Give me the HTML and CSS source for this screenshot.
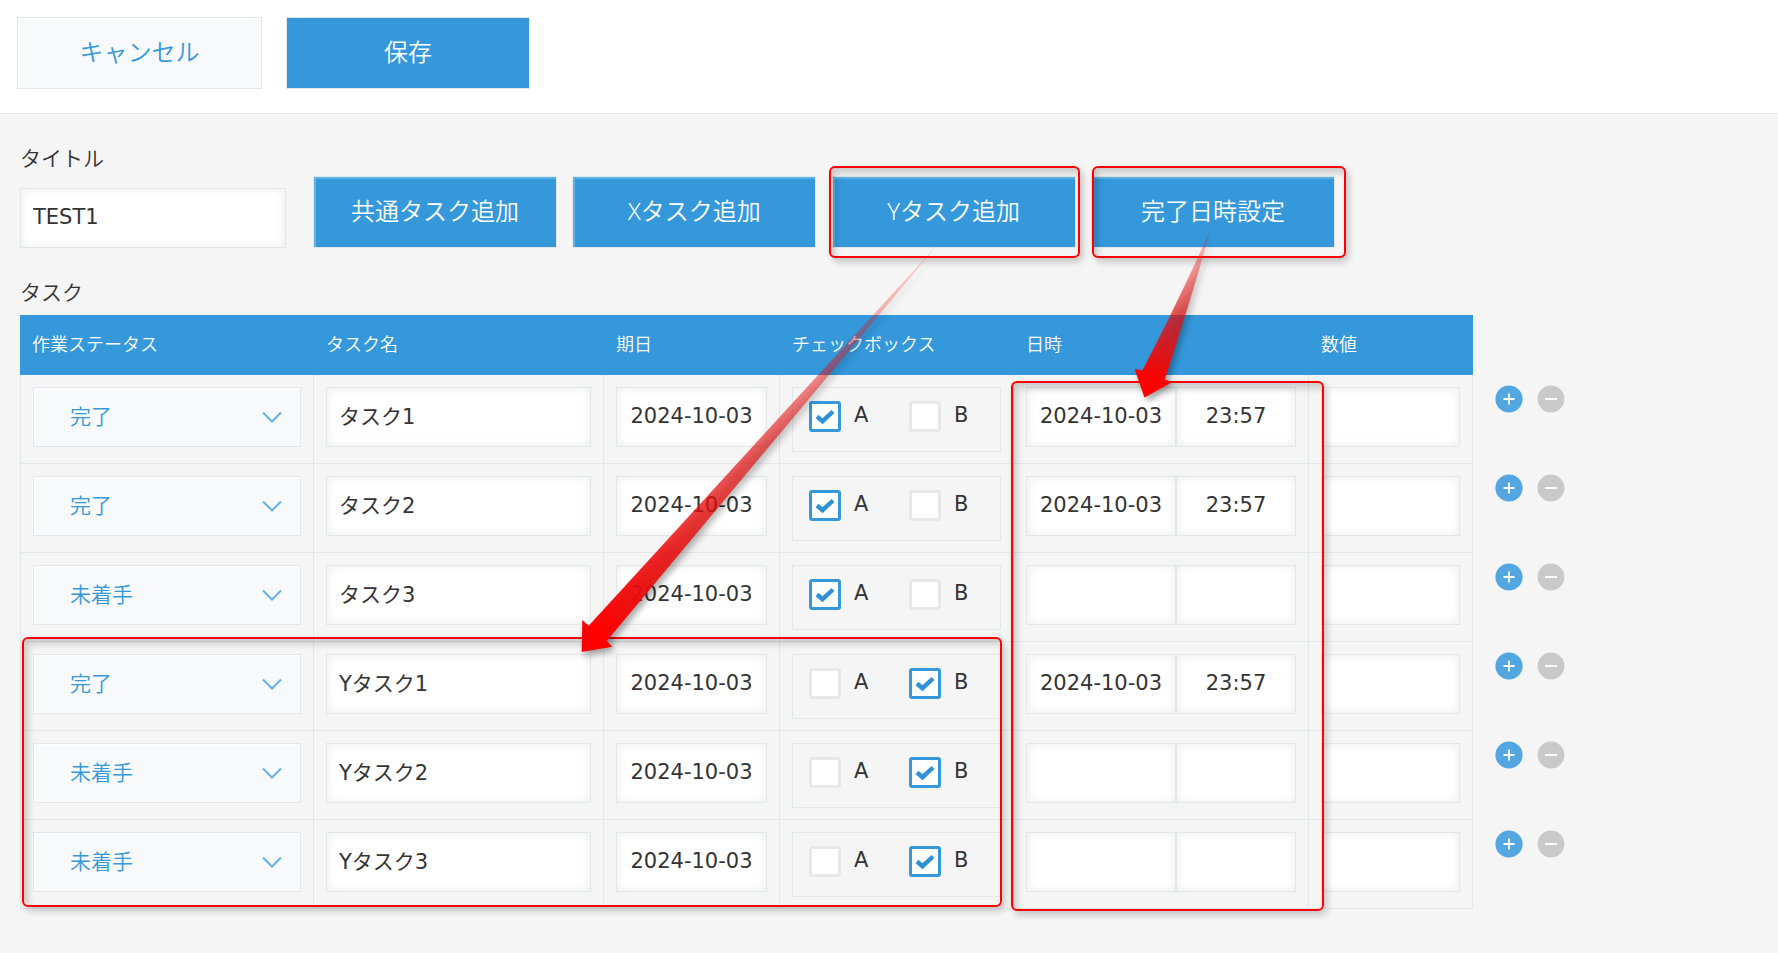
FILE: index.html
```html
<!DOCTYPE html>
<html lang="ja">
<head>
  <meta charset="UTF-8">
  <title>タスク</title>
  <meta name="viewport" content="width=device-width, initial-scale=1.0">
  <link rel="stylesheet" href="styles.css">
</head>
<body>

  <header class="toolbar">
    <button class="btn btn-cancel">キャンセル</button>
    <button class="btn btn-save">保存</button>
  </header>

  <main class="record">
    <div class="title-row">
      <div class="field">
        <label class="field-label" for="title">タイトル</label>
        <input class="input" type="text" id="title" value="TEST1">
      </div>
      <div class="actions">
        <button class="btn btn-action">共通タスク追加</button>
        <button class="btn btn-action">Xタスク追加</button>
        <button class="btn btn-action">Yタスク追加</button>
        <button class="btn btn-action">完了日時設定</button>
      </div>
    </div>

    <div class="field-label table-label">タスク</div>
    <table class="task-table">
      <colgroup>
        <col class="col-status">
        <col class="col-name">
        <col class="col-date">
        <col class="col-check">
        <col class="col-datetime">
        <col class="col-number">
        <col class="col-buttons">
      </colgroup>
      <thead>
        <tr>
          <th>作業ステータス</th>
          <th>タスク名</th>
          <th>期日</th>
          <th>チェックボックス</th>
          <th>日時</th>
          <th>数値</th>
          <td></td>
        </tr>
      </thead>
      <tbody id="taskRows"></tbody>
    </table>
  </main>

  <!-- annotations -->
  <div class="mark mark-ytask"></div>
  <div class="mark mark-donetime"></div>
  <div class="mark mark-rows"></div>
  <div class="mark mark-datetime"></div>
  <svg class="arrows" width="1778" height="953" viewBox="0 0 1778 953">
    <defs>
      <linearGradient id="fade1" gradientUnits="userSpaceOnUse" x1="940" y1="242" x2="597" y2="634">
        <stop offset="0" stop-color="#f00" stop-opacity="0.1"/>
        <stop offset="0.5" stop-color="#e51010" stop-opacity="0.62"/>
        <stop offset="0.9" stop-color="#f00a0a" stop-opacity="0.95"/>
        <stop offset="1" stop-color="#f00"/>
      </linearGradient>
      <linearGradient id="fade2" gradientUnits="userSpaceOnUse" x1="1211" y1="228" x2="1152" y2="378">
        <stop offset="0" stop-color="#f00" stop-opacity="0.15"/>
        <stop offset="0.5" stop-color="#e51010" stop-opacity="0.62"/>
        <stop offset="0.9" stop-color="#f00a0a" stop-opacity="0.95"/>
        <stop offset="1" stop-color="#f00"/>
      </linearGradient>
    </defs>
    <path fill="url(#fade1)" d="M940 242L588.7 625.7L582.3 620L581.7 652L612.3 646.7L606.7 641Z"/>
    <path fill="url(#fade2)" d="M1211 228Q1184 290 1142.5 370.3L1134.6 369L1144.5 397.5L1173 381.7L1164.7 379.7Q1194 290 1211 228Z"/>
  </svg>

  <script>
    const tasks = [
      { status: "完了", name: "タスク1", date: "2024-10-03", check: "A", doneDate: "2024-10-03", doneTime: "23:57" },
      { status: "完了", name: "タスク2", date: "2024-10-03", check: "A", doneDate: "2024-10-03", doneTime: "23:57" },
      { status: "未着手", name: "タスク3", date: "2024-10-03", check: "A", doneDate: "", doneTime: "" },
      { status: "完了", name: "Yタスク1", date: "2024-10-03", check: "B", doneDate: "2024-10-03", doneTime: "23:57" },
      { status: "未着手", name: "Yタスク2", date: "2024-10-03", check: "B", doneDate: "", doneTime: "" },
      { status: "未着手", name: "Yタスク3", date: "2024-10-03", check: "B", doneDate: "", doneTime: "" }
    ];

    function checkItem(label, checked) {
      return `
        <span class="check-item">
          <span class="check-box${checked ? " checked" : ""}">
            ${checked ? '<svg width="20" height="16" viewBox="0 0 20 16"><path d="M2 7.5L7.5 12.2L18 2.5"/></svg>' : ""}
          </span>
          <span class="check-label">${label}</span>
        </span>`;
    }

    document.getElementById("taskRows").innerHTML = tasks.map(t => `
      <tr>
        <td>
          <div class="select">
            <span>${t.status}</span>
            <svg class="chevron" width="20" height="13" viewBox="0 0 20 13"><path d="M1 1.5L10 10.5L19 1.5"/></svg>
          </div>
        </td>
        <td><input class="input" type="text" value="${t.name}"></td>
        <td><input class="input input-center" type="text" value="${t.date}"></td>
        <td>
          <div class="check-group">${checkItem("A", t.check === "A")}${checkItem("B", t.check === "B")}</div>
        </td>
        <td>
          <div class="datetime">
            <input class="input input-center" type="text" value="${t.doneDate}">
            <input class="input input-center input-time" type="text" value="${t.doneTime}">
          </div>
        </td>
        <td><input class="input" type="text" value=""></td>
        <td class="row-buttons">
          <div class="row-icons">
            <svg width="28" height="28" viewBox="0 0 28 28"><circle cx="14" cy="14" r="13.6" fill="#53a7e0"/><path d="M8.5 14h11M14 8.5v11"/></svg>
            <svg width="28" height="28" viewBox="0 0 28 28"><circle cx="14" cy="14" r="13.4" fill="#c9c9c9"/><path d="M8 14h12"/></svg>
          </div>
        </td>
      </tr>`).join("");
  </script>
</body>
</html>
```
FILE: styles.css
```css
* {
  box-sizing: border-box;
}

body {
  margin: 0;
  height: 953px;
  overflow: hidden;
  position: relative;
  background: #f5f5f5;
  color: #333;
  font-family: "DejaVu Sans", "Noto Sans CJK JP", sans-serif;
  font-size: 21px;
}

.toolbar {
  display: flex;
  gap: 24px;
  height: 114px;
  padding: 17px;
  background: #fff;
  border-bottom: 1px solid #e3e7e8;
}

.btn {
  width: 244px;
  height: 72px;
  padding: 0 0 6px;
  border: 1px solid #e3e7e8;
  font-family: "Noto Sans", "Noto Sans CJK JP", sans-serif;
  font-size: 24px;
  font-weight: 350;
  color: #fff;
  background: #3498db;
}

.btn-cancel {
  width: 245px;
  color: #3498db;
  background: #f7f9fa;
  box-shadow: inset 1px 1px 3px #fff;
}

.btn-action {
  box-shadow: inset 2px 2px 1px #5db4e6;
}

.record {
  padding: 30px 0 0 20px;
}

.title-row {
  display: flex;
  gap: 27px;
}

.field {
  width: 266px;
}

.field-label {
  display: block;
  height: 44px;
  line-height: 26px;
  font-family: "Noto Sans CJK JP", sans-serif;
  font-weight: 350;
}

.actions {
  display: flex;
  gap: 15.3px;
  padding-top: 32px;
}

.table-label {
  height: 37px;
  margin-top: 30px;
}

.input {
  display: block;
  width: 100%;
  height: 60px;
  padding: 0 12px 4px;
  border: 1px solid #e3e7e8;
  background: #fff;
  box-shadow: inset 2px 2px 8px #f3f3f3, inset -2px -2px 8px #f3f3f3;
  color: #333;
  font-family: inherit;
  font-size: 21px;
}

.input-center,
#title {
  padding-bottom: 2px;
}

.input-center {
  padding-left: 0;
  padding-right: 0;
  text-align: center;
}

.task-table {
  table-layout: fixed;
  width: 1563px;
  border-spacing: 0;
}

.col-status { width: 294px; }
.col-name { width: 290px; }
.col-date { width: 176px; }
.col-check { width: 234px; }
.col-datetime { width: 295px; }
.col-number { width: 164px; }
.col-buttons { width: 110px; }

th {
  height: 60px;
  padding: 0 12px 4px;
  background: #3498db;
  color: #fff;
  font-family: "Noto Sans CJK JP", sans-serif;
  font-size: 18px;
  font-weight: 350;
  text-align: left;
}

tbody td {
  height: 89px;
  padding: 12px 12px 0;
  border-right: 1px solid #e3e7e8;
  border-bottom: 1px solid #e3e7e8;
  vertical-align: top;
}

tbody td:first-child {
  border-left: 1px solid #e3e7e8;
}

.select {
  display: flex;
  align-items: center;
  justify-content: space-between;
  width: 268px;
  height: 60px;
  padding: 0 18px 0 36px;
  border: 1px solid #e3e7e8;
  background: #f7f9fa;
  box-shadow: inset 1px 1px 3px #fff;
  color: #3498db;
  font-family: "Noto Sans CJK JP", sans-serif;
  font-weight: 350;
}

.select span {
  padding-bottom: 5px;
}

.chevron path {
  fill: none;
  stroke: #63b1e4;
  stroke-width: 2;
}

.check-group {
  display: flex;
  height: 65px;
  width: 209px;
  padding: 13px 0 0 16px;
  border: 1px solid #e3e7e8;
}

.check-item {
  display: flex;
  flex: 0 0 100px;
  gap: 13px;
}

.check-box {
  display: flex;
  align-items: center;
  justify-content: center;
  width: 32px;
  height: 31px;
  border: 3px solid #e8e8e8;
  border-radius: 3px;
  background: #fff;
}

.check-box.checked {
  border-color: #3498db;
}

.check-box path {
  fill: none;
  stroke: #2f92d9;
  stroke-width: 4.4;
}

.check-label {
  line-height: 29px;
}

.datetime {
  display: flex;
}

.datetime .input {
  width: 150px;
}

.datetime .input-time {
  width: 120px;
}

tbody td.row-buttons {
  padding: 10px 0 0 22px;
  border: 0;
}

.row-icons {
  display: flex;
  gap: 14px;
}

.row-icons path {
  stroke: #fff;
  stroke-width: 1.8;
}

/* annotations drawn over the form */
.mark {
  position: absolute;
  border: 2px solid #f00;
  border-radius: 6px;
  box-shadow: 3px 4px 7px rgba(0, 0, 0, 0.2), inset 4px 5px 7px rgba(0, 0, 0, 0.18);
}

.mark-ytask {
  left: 829px;
  top: 166px;
  width: 251px;
  height: 92px;
}

.mark-donetime {
  left: 1092px;
  top: 166px;
  width: 254px;
  height: 92px;
}

.mark-rows {
  left: 22px;
  top: 637px;
  width: 980px;
  height: 270px;
}

.mark-datetime {
  left: 1011px;
  top: 381px;
  width: 313px;
  height: 530px;
}

.arrows {
  position: absolute;
  left: 0;
  top: 0;
  filter: drop-shadow(3px 4px 3px rgba(0, 0, 0, 0.35));
}
```
